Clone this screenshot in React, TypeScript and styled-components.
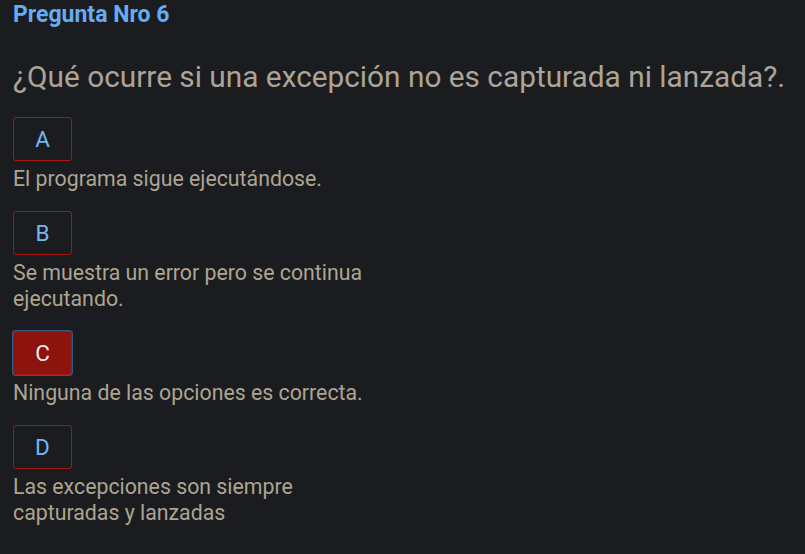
import React, { FunctionComponent } from "react";
import styled, { createGlobalStyle } from "styled-components";

const GlobalStyle = createGlobalStyle`
  html, body {
    margin: 0;
    padding: 0;
    background: #1b1c1f;
  }
  body {
    font-family: Roboto, "Liberation Sans", sans-serif;
  }
`;

const Page = styled.div`
  min-height: 554px;
  box-sizing: border-box;
  padding: 3px 13px 20px;
  background: #1b1c1f;
`;

const Title = styled.h3`
  margin: 0;
  font-size: 23px;
  line-height: 24px;
  font-weight: 700;
  color: #62adf3;
`;

const Question = styled.h2`
  margin: 34px 0 24px;
  font-size: 29.8px;
  line-height: 32px;
  font-weight: 400;
  color: #aba497;
  white-space: nowrap;
`;

const OptionList = styled.div`
  display: flex;
  flex-direction: column;
  gap: 19px;
`;

const Option = styled.div`
  display: flex;
  flex-direction: column;
  align-items: flex-start;
`;

const LetterButton = styled.button<{ $selected?: boolean }>`
  box-sizing: border-box;
  min-width: 59px;
  height: 44px;
  padding: 8px 21px;
  border: 1px solid #a51611;
  border-radius: 3px;
  background: ${(p) => (p.$selected ? "#8c130e" : "transparent")};
  color: ${(p) => (p.$selected ? "#f2ece4" : "#72b6f4")};
  font-family: Roboto, "Liberation Sans", sans-serif;
  font-size: 22.5px;
  line-height: 26px;
  cursor: pointer;
  box-shadow: ${(p) => (p.$selected ? "0 0 0 1px #2b5d86" : "none")};
`;

const OptionText = styled.p`
  margin: 5px 0 0;
  max-width: 375px;
  font-size: 21.3px;
  line-height: 26px;
  color: #ada592;
`;

type Choice = {
  letter: string;
  text: string;
};

const choices: Choice[] = [
  { letter: "A", text: "El programa sigue ejecutándose." },
  { letter: "B", text: "Se muestra un error pero se continua ejecutando." },
  { letter: "C", text: "Ninguna de las opciones es correcta." },
  { letter: "D", text: "Las excepciones son siempre capturadas y lanzadas" },
];

const App: FunctionComponent = () => {
  const selected = "C";

  return (
    <Page>
      <GlobalStyle />
      <Title>Pregunta Nro 6</Title>
      <Question>¿Qué ocurre si una excepción no es capturada ni lanzada?.</Question>
      <OptionList>
        {choices.map((choice) => (
          <Option key={choice.letter}>
            <LetterButton $selected={choice.letter === selected}>
              {choice.letter}
            </LetterButton>
            <OptionText>{choice.text}</OptionText>
          </Option>
        ))}
      </OptionList>
    </Page>
  );
};

export default App;
